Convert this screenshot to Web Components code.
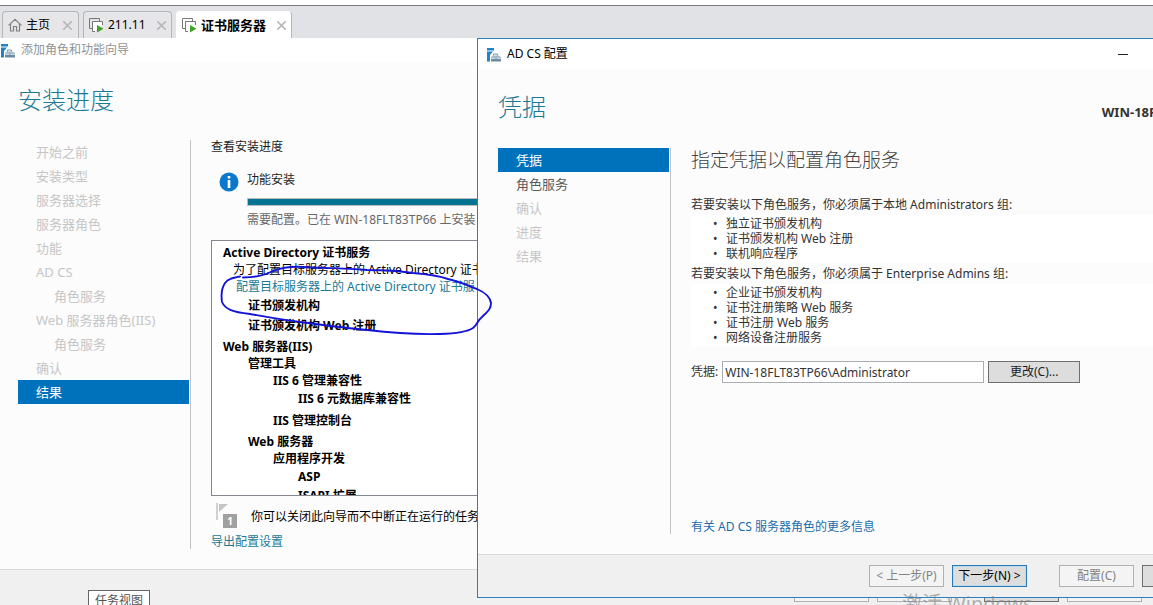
<!DOCTYPE html>
<html lang="zh-CN">
<head>
<meta charset="utf-8">
<title>证书服务器</title>
<style>
html, body { height: 100%; margin: 0; }
body {
  font: 12px/18px "Noto Sans", "Noto Sans CJK SC", sans-serif;
  color: #1e1e1e;
  overflow: hidden;
}
</style>
</head>
<body>
<remote-desktop></remote-desktop>

<script>
const define = (name, html, setup) => {
  const template = document.createElement('template');
  template.innerHTML = '<style>*{box-sizing:border-box}:host{box-sizing:border-box}</style>' + html;
  customElements.define(name, class extends HTMLElement {
    constructor() {
      super();
      this.attachShadow({ mode: 'open' }).append(template.content.cloneNode(true));
    }
    connectedCallback() { if (setup) setup(this, this.shadowRoot); }
  });
};

define('server-icon', `
<style>:host{display:block;width:15px;height:15px;flex:none} svg{display:block}</style>
<svg width="15" height="15" viewBox="0 0 15 15" aria-hidden="true">
  <path fill="#2182c8" d="M0 1h7v2.500H0zM0 4.500h6L3 8v6.500H0z"/>
  <path fill="none" stroke="#7796ab" d="M6.500 8.500V7h4v1.500"/>
  <path fill="#a3b8c6" d="M4 10l2-1.500h5.500L14 10v1.500H4z"/>
  <path fill="#6c8ba0" d="M4 11.500h10v3H4z"/>
  <path fill="none" stroke="#e8eff4" stroke-width=".8" d="M4 11.300h4M10 11.300h4"/>
</svg>`);

define('vm-icon', `
<style>:host{display:block;width:15px;height:15px;flex:none} svg{display:block}</style>
<svg width="15" height="15" viewBox="0 0 15 15" aria-hidden="true">
  <path fill="none" stroke="#777" d="M3 10.500H.5V.5h10V3"/>
  <path fill="#fff" stroke="#777" d="M13.500 7V3.500h-10v10H6"/>
  <path fill="#41a324" d="M8 7l6.500 3.700L8 14.500z"/>
</svg>`);

define('home-icon', `
<style>:host{display:block;width:14px;height:14px;flex:none} svg{display:block}</style>
<svg width="14" height="14" viewBox="0 0 14 14" aria-hidden="true">
  <path fill="none" stroke="#808084" stroke-width="1.200" d="M.6 7.400L7 1.300l6.400 6.100M2.500 6v7h3V8.500h3V13h3V6"/>
</svg>`);

define('info-icon', `
<style>:host{display:block;width:20px;height:20px;flex:none} svg{display:block}</style>
<svg width="20" height="20" viewBox="0 0 20 20" aria-hidden="true">
  <circle cx="10" cy="10" r="9.500" fill="#0a78cc"/>
  <path fill="#fff" d="M8.700 4h2.600v2.500H8.700zM8.700 8h2.600v8H8.700z"/>
</svg>`);

define('flag-icon', `
<style>
:host{display:block;position:relative;width:24px;height:26px;flex:none}
svg{display:block}
b{position:absolute;left:8px;top:11px;width:14px;height:14px;background:#a0a0a0;color:#fff;font-size:10px;line-height:14px;text-align:center}
</style>
<svg width="24" height="26" viewBox="0 0 24 26" aria-hidden="true">
  <path fill="#d0d0d0" d="M1 0h2v17H1z"/><path fill="#c4c4c4" d="M4 1h9L4 9z"/>
</svg><b>1</b>`);

define('tab-item', `
<style>
:host{display:flex;height:27px;border:1px solid #b4b6ba;border-bottom:0;border-radius:4px 4px 0 0;background:#e6e6e9;color:#000}
:host([active]){background:#fff;font-weight:bold;border-color:#fff #b4b6ba #fff #fff}
.tab{display:flex;align-items:center;gap:4px;flex:1;padding:0 5px;font:inherit;color:inherit;background:none;border:0;white-space:nowrap}
.close{display:flex;align-items:center;padding:0 6px;background:none;border:0}
:host([active]) .tab{font-size:13px}
</style>
<button class="tab" type="button" role="tab"><slot name="icon"></slot><slot></slot></button>
<button class="close" type="button" aria-label="关闭标签页">
  <svg width="9" height="9" viewBox="0 0 9 9"><path d="M0 0l9 9M9 0L0 9" stroke="#b9b9bb" stroke-width="1.600"/></svg>
</button>`);

define('tab-strip', `
<style>
:host{display:block;flex:none}
.menu{height:6px;background:#fff;border-bottom:1px solid #77777b}
nav{display:flex;gap:4px;height:32px;padding:5px 2px 0;background:#e1e2e5}
.home{width:77px}.vm{width:89px}.cert{width:116px}
</style>
<div class="menu"></div>
<nav role="tablist">
  <tab-item class="home"><home-icon slot="icon"></home-icon>主页</tab-item>
  <tab-item class="vm"><vm-icon slot="icon"></vm-icon>211.11</tab-item>
  <tab-item class="cert" active><vm-icon slot="icon"></vm-icon>证书服务器</tab-item>
</nav>`);

define('wizard-step', `
<style>
:host{display:block}
a{display:block;height:24px;padding-left:18px;font-size:13px;line-height:24px;color:#c6c6c6;text-decoration:none;white-space:nowrap}
:host([sub]) a{padding-left:36px}
:host([enabled]) a{color:#5a5a5a}
:host([current]) a{background:#0072bc;color:#fff}
</style>
<a href="#"><slot></slot></a>`);

define('wizard-nav', `
<style>
:host{display:block;flex:none;width:173px;padding-right:1px;border-right:1px solid #c2c2c2}
</style>
<slot></slot>`);

define('wizard-button', `
<style>
:host{display:block;width:75px;flex:none}
:host([wide]){width:92px}
button{display:block;width:100%;height:22px;padding:0;font:inherit;line-height:18px;color:#1e1e1e;background:#ddd;border:1px solid #707070;white-space:nowrap}
:host([off]) button{color:#838383;background:#f4f4f4;border-color:#adb2b5}
:host([primary]) button{color:#000;border-color:#2a7ab8;box-shadow:inset 0 0 0 1px #b8dcee}
</style>
<button type="button"><slot></slot></button>`, (el, root) => {
  const button = root.querySelector('button');
  button.disabled = el.hasAttribute('off');
  if (el.title) button.setAttribute('aria-label', el.title);
});

define('feature-tree', `
<style>
:host{display:block;height:256px;padding:3px 0 0 11px;border:1px solid #828790;background:#fff;color:#000;overflow:hidden;white-space:nowrap}
ul{list-style:none;margin:0;padding:0}
ul ul{padding-left:25px;margin-bottom:3px}
li{font-weight:bold;line-height:18px}
.group{line-height:17px}
.group>ul>li:not(.group){line-height:19px}
p{margin:0 0 0 10px;font-weight:normal;line-height:15px}
a{display:block;margin:0 0 0 13px;font-weight:normal;line-height:20px;color:#1a7a96;text-decoration:none}
.role li{margin-bottom:2px}
</style>
<ul>
  <li class="role">Active Directory 证书服务
    <p>为了配置目标服务器上的 Active Directory 证书</p>
    <a href="#">配置目标服务器上的 Active Directory 证书服</a>
    <ul><li>证书颁发机构</li><li>证书颁发机构 Web 注册</li></ul>
  </li>
  <li class="group">Web 服务器(IIS)
    <ul>
      <li class="group">管理工具
        <ul>
          <li class="group">IIS 6 管理兼容性<ul><li>IIS 6 元数据库兼容性</li></ul></li>
          <li>IIS 管理控制台</li>
        </ul>
      </li>
      <li class="group">Web 服务器
        <ul><li class="group">应用程序开发<ul><li>ASP</li><li>ISAPI 扩展</li></ul></li></ul>
      </li>
    </ul>
  </li>
</ul>`);

define('role-wizard', `
<style>
:host{display:flex;flex-direction:column;flex:1;min-height:0;background:#fcfcfc}
header{display:flex;align-items:center;gap:5px;height:24px;flex:none;padding-left:1px;background:#fff;color:#929292}
h1{margin:0;padding:20px 18px 0;font-size:24px;line-height:36px;font-weight:300;color:#1a7a96}
main{display:flex;flex:1;min-height:0;padding:22px 0 20px 18px}
section{flex:1;min-width:0;padding-left:20px;white-space:nowrap}
h2{margin:0;padding-bottom:14px;font-size:12px;line-height:14px;font-weight:normal}
.status{display:flex;gap:8px;padding-left:8px;margin-bottom:9px}
info-icon{margin-top:4px}
.status div{flex:1}
.status p{margin:0;line-height:24px}
.status .note{line-height:22px;color:#686868}
progress{display:block;width:100%;height:8px;margin:6px 0 3px;appearance:none;border:1px solid #bcbcbc;background:#e6e6e6}
progress::-webkit-progress-bar{background:#e6e6e6}
progress::-webkit-progress-value{background:#047391}
.hint{display:flex;gap:12px;padding:7px 0 0 4px}
.hint p{margin:0;padding-top:5px;color:#000}
section>a{display:block;line-height:22px;margin-top:2px;color:#1a7a96;text-decoration:none}
footer{display:flex;justify-content:flex-end;gap:8px;height:36px;flex:none;padding:10px 11px 0;border-top:1px solid #d9d9d9;background:#f0f0f0}
.close{margin-left:24px}
</style>
<header><server-icon></server-icon>添加角色和功能向导</header>
<h1>安装进度</h1>
<main>
  <wizard-nav>
    <wizard-step>开始之前</wizard-step>
    <wizard-step>安装类型</wizard-step>
    <wizard-step>服务器选择</wizard-step>
    <wizard-step>服务器角色</wizard-step>
    <wizard-step>功能</wizard-step>
    <wizard-step>AD CS</wizard-step>
    <wizard-step sub>角色服务</wizard-step>
    <wizard-step>Web 服务器角色(IIS)</wizard-step>
    <wizard-step sub>角色服务</wizard-step>
    <wizard-step>确认</wizard-step>
    <wizard-step current>结果</wizard-step>
  </wizard-nav>
  <section>
    <h2>查看安装进度</h2>
    <div class="status">
      <info-icon></info-icon>
      <div>
        <p>功能安装</p>
        <progress value="1" max="1" aria-label="功能安装"></progress>
        <p class="note">需要配置。已在 WIN-18FLT83TP66 上安装</p>
      </div>
    </div>
    <feature-tree></feature-tree>
    <div class="hint"><flag-icon></flag-icon><p>你可以关闭此向导而不中断正在运行的任务</p></div>
    <a href="#">导出配置设置</a>
  </section>
</main>
<footer>
  <wizard-button off title="上一步"></wizard-button>
  <wizard-button off title="下一步"></wizard-button>
  <wizard-button class="close" title="关闭"></wizard-button>
  <wizard-button off title="取消"></wizard-button>
</footer>`);

define('adcs-wizard', `
<style>
:host{display:flex;flex-direction:column;border:1px solid #2a7fbd;background:#fcfcfc}
header{display:flex;align-items:center;gap:5px;height:30px;flex:none;padding:0 99px 0 9px;background:#fff;color:#000}
header span{flex:1}
header button{width:12px;height:12px;padding:0;border:0;background:linear-gradient(#222,#222) center/10px 1px no-repeat}
.top{display:flex;justify-content:space-between;padding:20px 12px 0 20px}
h1{margin:0;font-size:24px;line-height:36px;font-weight:300;color:#1a7a96}
.top b{padding-top:14px;font-size:13px;line-height:18px;color:#333}
main{display:flex;flex:1;min-height:0;padding:23px 0 20px 20px}
section{display:flex;flex-direction:column;flex:1;padding-left:20px;color:#333;white-space:nowrap}
h2{margin:0 0 23px;font-size:19px;line-height:24px;font-weight:300;color:#444}
p{margin:0;line-height:20px}
ul{margin:0 0 1px;padding:1px 0 2px 35px;background:#fff;line-height:15px;list-style:none}
li{position:relative}
li::before{content:"•";position:absolute;left:-13px}
form{display:flex;align-items:center;gap:4px;margin-top:13px}
input{width:262px;height:22px;padding:0 2px;border:1px solid #abadb3;font:inherit;color:#333;background:#fff}
section>a{margin-top:auto;line-height:14px;color:#1a6cae;text-decoration:none}
footer{display:flex;gap:8px;height:43px;flex:none;justify-content:flex-end;padding:10px 11px 0 0;border-top:1px solid #d9d9d9;background:#f0f0f0}
.apply{margin-left:24px}
</style>
<header><server-icon></server-icon><span>AD CS 配置</span><button type="button" aria-label="最小化"></button></header>
<div class="top"><h1>凭据</h1><b>WIN-18FLT83TP66</b></div>
<main>
  <wizard-nav>
    <wizard-step current>凭据</wizard-step>
    <wizard-step enabled>角色服务</wizard-step>
    <wizard-step>确认</wizard-step>
    <wizard-step>进度</wizard-step>
    <wizard-step>结果</wizard-step>
  </wizard-nav>
  <section>
    <h2>指定凭据以配置角色服务</h2>
    <p>若要安装以下角色服务，你必须属于本地 Administrators 组:</p>
    <ul><li>独立证书颁发机构</li><li>证书颁发机构 Web 注册</li><li>联机响应程序</li></ul>
    <p>若要安装以下角色服务，你必须属于 Enterprise Admins 组:</p>
    <ul><li>企业证书颁发机构</li><li>证书注册策略 Web 服务</li><li>证书注册 Web 服务</li><li>网络设备注册服务</li></ul>
    <form>
      <label for="credential">凭据:</label>
      <input id="credential" type="text" value="WIN-18FLT83TP66\\Administrator">
      <wizard-button wide>更改(C)...</wizard-button>
    </form>
    <a href="#">有关 AD CS 服务器角色的更多信息</a>
  </section>
</main>
<footer>
  <wizard-button off>&lt; 上一步(P)</wizard-button>
  <wizard-button primary>下一步(N) &gt;</wizard-button>
  <wizard-button class="apply" off>配置(C)</wizard-button>
  <wizard-button title="取消"></wizard-button>
</footer>`);

define('ink-stroke', `
<style>:host{display:block;pointer-events:none} svg{display:block}</style>
<svg width="280" height="76" viewBox="216 262 280 76" aria-hidden="true">
  <path fill="none" stroke="#1414d8" stroke-width="1.900" stroke-linecap="round" stroke-linejoin="round"
   d="M240 276.500C232 278 228 279 225 283C221 289 221 295 222 302C225 309 232 312 250 314C267 317 283 320 300 322C323 325 345 328 367 330C392 333 420 334.500 440 334C455 333.500 467 332 473 328C478 324 477 321 482 317C488 311 491 309 491 303C490 296 484 292 477 289C467 285 458 281 448 279C437 275 425 274 413 273C393 270 380 270 367 270C345 268 320 268 303 267C290 266 281 268 273 271C263 276 256 277 243 277.500"/>
</svg>`);

define('remote-desktop', `
<style>
:host{display:flex;flex-direction:column;position:relative;height:100%;overflow:hidden;background:#fcfcfc}
adcs-wizard{position:absolute;left:477px;right:-76px;top:38px;height:560px}
ink-stroke{position:absolute;left:216px;top:262px}
.tip{position:absolute;left:88px;top:590px;padding:0 6px;border:1px solid #666;background:#fff;color:#555;line-height:20px}
.activate{position:absolute;left:902px;top:590px;font-size:20px;line-height:28px;color:rgba(130,130,130,.6);white-space:nowrap}
</style>
<tab-strip></tab-strip>
<role-wizard></role-wizard>
<adcs-wizard></adcs-wizard>
<ink-stroke></ink-stroke>
<div class="tip" role="tooltip">任务视图</div>
<div class="activate">激活 Windows</div>`);
</script>
</body>
</html>
